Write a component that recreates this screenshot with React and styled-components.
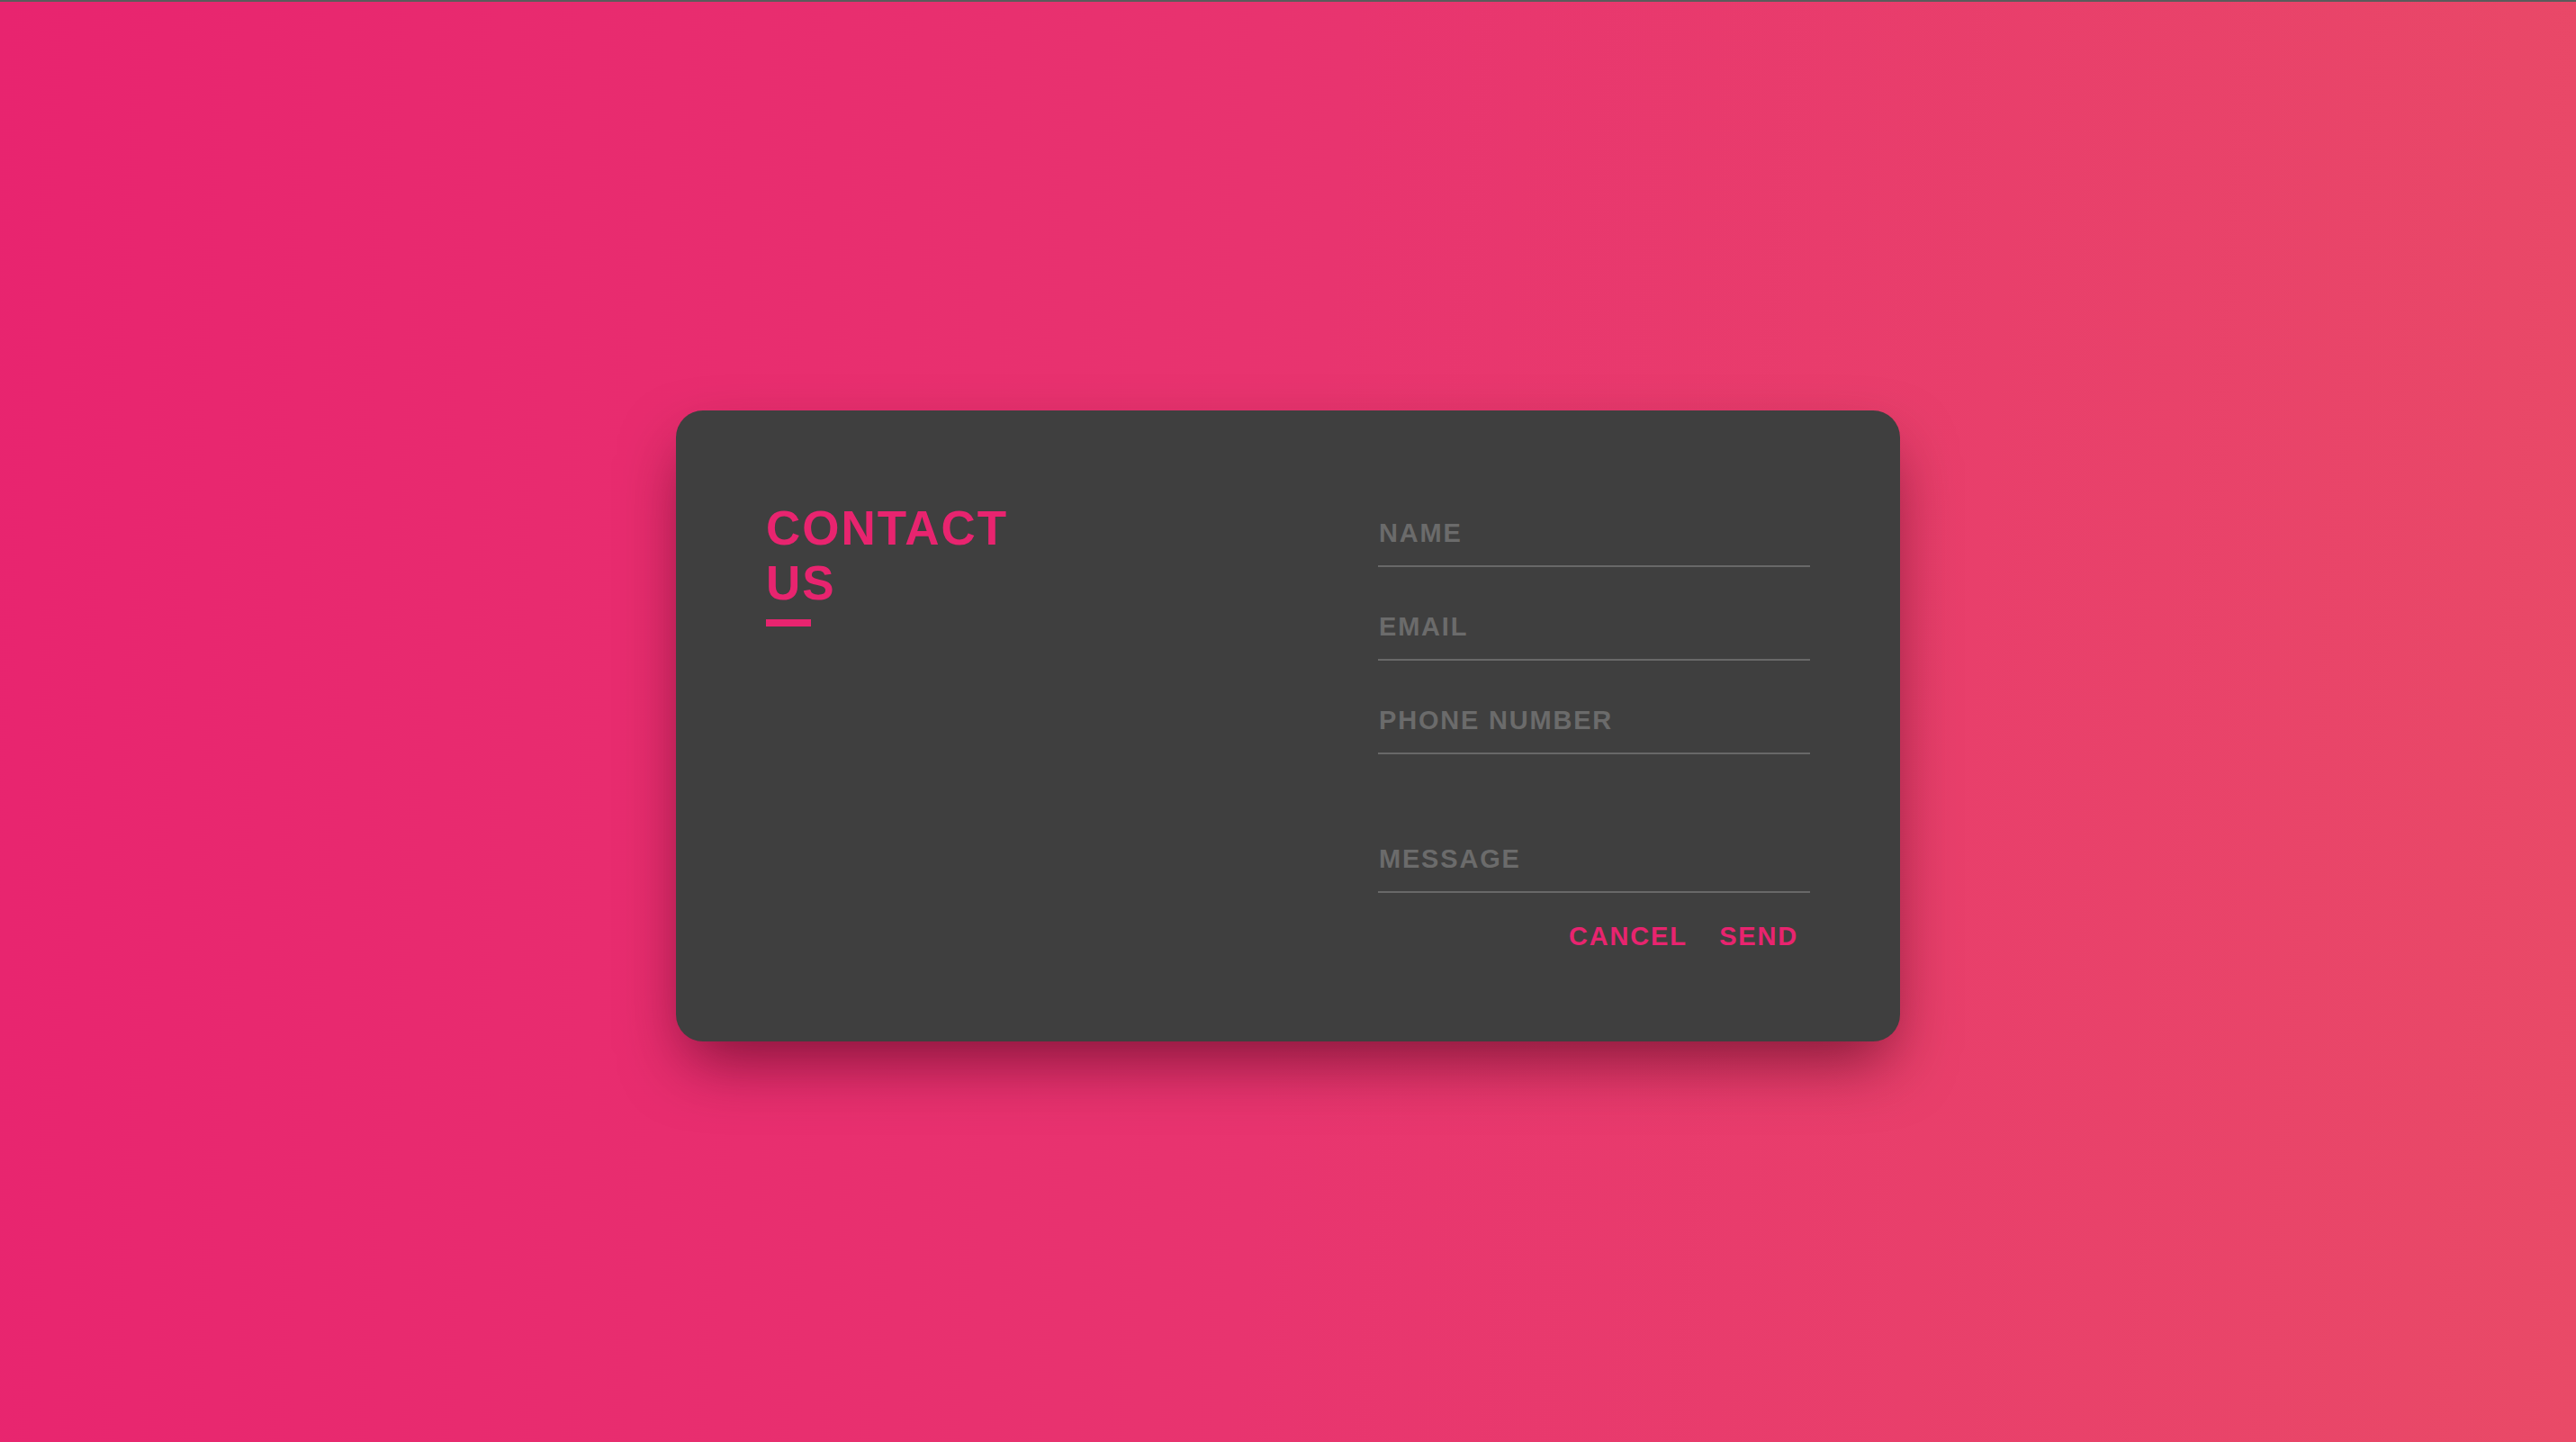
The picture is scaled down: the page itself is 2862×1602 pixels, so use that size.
import React from "react";
import styled, { createGlobalStyle } from "styled-components";

const GlobalStyle = createGlobalStyle`
  html, body {
    margin: 0;
    padding: 0;
  }
  body {
    font-family: "Liberation Sans", Arial, sans-serif;
  }
  * { box-sizing: border-box; }
`;

const Page = styled.div`
  min-height: 1602px;
  border-top: 2px solid #5b5b5b;
  background: linear-gradient(95deg, #e8246f 0%, #e8346f 50%, #e94a67 100%);
  display: flex;
  justify-content: center;
  align-items: flex-start;
  padding-top: 454px;
`;

const Card = styled.div`
  width: 1360px;
  height: 701px;
  background: #3f3f3f;
  border-radius: 30px;
  box-shadow: 0 32px 70px -12px rgba(60, 0, 20, 0.6);
  padding: 100px 100px 0 100px;
  display: grid;
  grid-template-columns: 1fr 480px;
  align-items: start;
`;

const TitleBlock = styled.div`
  display: flex;
  flex-direction: column;
  align-items: flex-start;
`;

const Title = styled.h1`
  margin: 0;
  font-family: "Liberation Sans", Arial, sans-serif;
  font-weight: 700;
  font-size: 53px;
  line-height: 61px;
  letter-spacing: 2px;
  color: #e8246f;
  text-transform: uppercase;
`;

const Bar = styled.div`
  width: 50px;
  height: 8px;
  margin-top: 10px;
  background: #e8246f;
`;

const Form = styled.form`
  display: flex;
  flex-direction: column;
  gap: 30px;
`;

const fieldStyles = `
  display: block;
  width: 100%;
  margin: 0;
  border: none;
  border-bottom: 2px solid #686868;
  background: transparent;
  outline: none;
  color: #cfcfcf;
  font-family: "Liberation Sans", Arial, sans-serif;
  font-weight: 700;
  font-size: 29px;
  line-height: 33px;
  letter-spacing: 1.8px;
  text-transform: uppercase;
  &::placeholder {
    color: #6b6b6b;
    opacity: 1;
  }
`;

const Input = styled.input`
  ${fieldStyles}
  height: 74px;
  padding: 20px 0 19px 1px;
`;

const TextArea = styled.textarea`
  ${fieldStyles}
  height: 124px;
  padding: 70px 0 19px 1px;
  resize: none;
  overflow: hidden;
`;

const Actions = styled.div`
  display: flex;
  justify-content: flex-end;
  gap: 9.5px;
  margin-top: -6.5px;
`;

const Button = styled.button`
  border: none;
  background: transparent;
  padding: 8px 13px;
  cursor: pointer;
  color: #e8246f;
  font-family: "Liberation Sans", Arial, sans-serif;
  font-weight: 700;
  font-size: 29px;
  line-height: 33px;
  letter-spacing: 1.8px;
  text-transform: uppercase;
`;

export default function App() {
  return (
    <>
      <GlobalStyle />
      <Page>
        <Card>
          <TitleBlock>
            <Title>
              Contact
              <br />
              Us
            </Title>
            <Bar />
          </TitleBlock>
          <Form onSubmit={(e) => e.preventDefault()}>
            <Input placeholder="Name" />
            <Input placeholder="Email" />
            <Input placeholder="Phone Number" />
            <TextArea rows={1} placeholder="Message" />
            <Actions>
              <Button type="button">Cancel</Button>
              <Button type="submit">Send</Button>
            </Actions>
          </Form>
        </Card>
      </Page>
    </>
  );
}
